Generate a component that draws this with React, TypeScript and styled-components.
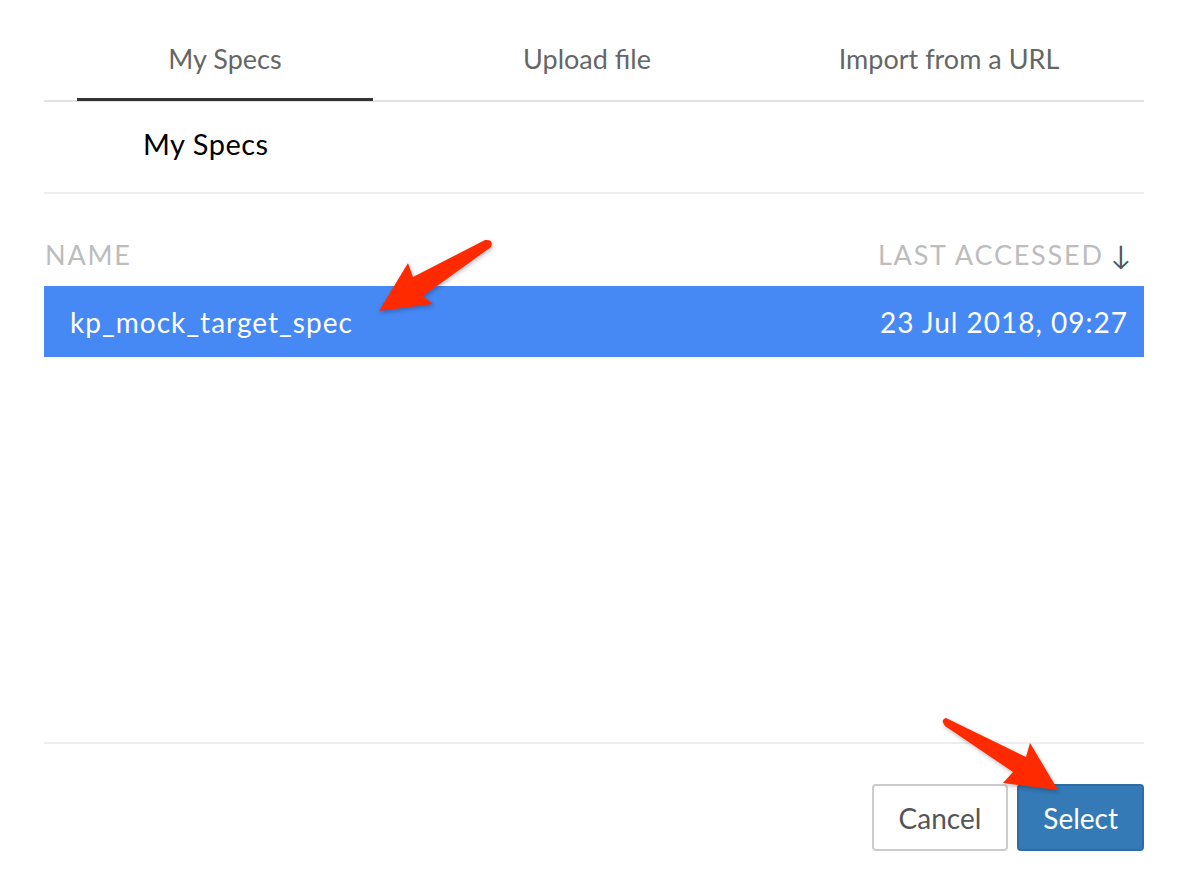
import React from "react";
import styled, { createGlobalStyle } from "styled-components";

const Global = createGlobalStyle`
  html, body { margin: 0; padding: 0; background: #fff; }
  body { font-family: Lato, "Open Sans", sans-serif; }
  * { box-sizing: border-box; }
`;

const Page = styled.div`
  position: relative;
  width: 1190px;
  height: 888px;
  padding: 0 46px 0 44px;
  display: flex;
  flex-direction: column;
`;

const TabBar = styled.div`
  display: grid;
  grid-template-columns: repeat(3, 362px);
  height: 102px;
  border-bottom: 2px solid #e1e1e1;
`;

const Tab = styled.div<{ $active?: boolean }>`
  margin: 0 ${(p) => (p.$active ? "33px" : "0")};
  display: flex;
  align-items: center;
  justify-content: center;
  padding-top: 18px;
  font-size: 27px;
  color: #666;
  border-bottom: 3px solid ${(p) => (p.$active ? "#333" : "transparent")};
  margin-bottom: -1px;
`;

const SectionTitle = styled.div`
  height: 92px;
  padding-left: 99px;
  padding-bottom: 8px;
  display: flex;
  align-items: center;
  font-size: 29px;
  letter-spacing: 0.5px;
  color: #000;
  border-bottom: 2px solid #eee;
`;

const HeaderRow = styled.div`
  display: flex;
  justify-content: space-between;
  align-items: center;
  height: 92px;
  padding: 28px 13px 0 1px;
  font-size: 27px;
  letter-spacing: 1.8px;
  color: #bdbdbd;
`;

const SortArrow = styled.span`
  color: #555;
  margin-left: 7px;
  letter-spacing: 0;
`;

const ListArea = styled.div`
  flex: 1;
`;

const FileRow = styled.div<{ $selected?: boolean }>`
  display: flex;
  justify-content: space-between;
  align-items: center;
  height: 71px;
  padding: 0 16px 0 26px;
  font-size: 28px;
  letter-spacing: 1px;
  color: ${(p) => (p.$selected ? "#fff" : "#333")};
  background: ${(p) => (p.$selected ? "#4688f4" : "transparent")};
`;

const Footer = styled.div`
  border-top: 2px solid #eee;
  padding: 40px 0 37px;
  display: flex;
  justify-content: flex-end;
  gap: 9px;
`;

const Button = styled.button<{ $primary?: boolean }>`
  height: 67px;
  padding: 0 ${(p) => (p.$primary ? "24px" : "25px")};
  font-family: Lato, "Open Sans", sans-serif;
  font-size: 28px;
  border-radius: 4px;
  border: 2px solid ${(p) => (p.$primary ? "#2e6da4" : "#ccc")};
  background: ${(p) => (p.$primary ? "#337ab7" : "#fff")};
  color: ${(p) => (p.$primary ? "#fff" : "#555")};
  cursor: pointer;
`;

const Annotations = styled.svg`
  position: absolute;
  left: 0;
  top: 0;
  width: 1190px;
  height: 888px;
  pointer-events: none;
  filter: drop-shadow(1px 2px 2px rgba(0, 0, 0, 0.25));
`;

export default function App() {
  return (
    <>
      <Global />
      <Page>
        <TabBar>
          <Tab $active>My Specs</Tab>
          <Tab>Upload file</Tab>
          <Tab>Import from a URL</Tab>
        </TabBar>
        <SectionTitle>My Specs</SectionTitle>
        <HeaderRow>
          <span>NAME</span>
          <span>
            LAST ACCESSED<SortArrow>↓</SortArrow>
          </span>
        </HeaderRow>
        <ListArea>
          <FileRow $selected>
            <span>kp_mock_target_spec</span>
            <span>23 Jul 2018, 09:27</span>
          </FileRow>
        </ListArea>
        <Footer>
          <Button>Cancel</Button>
          <Button $primary>Select</Button>
        </Footer>
        <Annotations viewBox="0 0 1190 888">
          <path
            d="M 485 240 L 413 277 L 408 263 L 379 311 L 433 304 L 423 296 L 491 247 Q 494 239 485 240 Z"
            fill="#ff2a00"
          />
          <path
            d="M 946 718 L 1026 757 L 1030 743 L 1058 790 L 1003 783 L 1013 772 L 945 726 Q 940 720 946 718 Z"
            fill="#ff2a00"
          />
        </Annotations>
      </Page>
    </>
  );
}
